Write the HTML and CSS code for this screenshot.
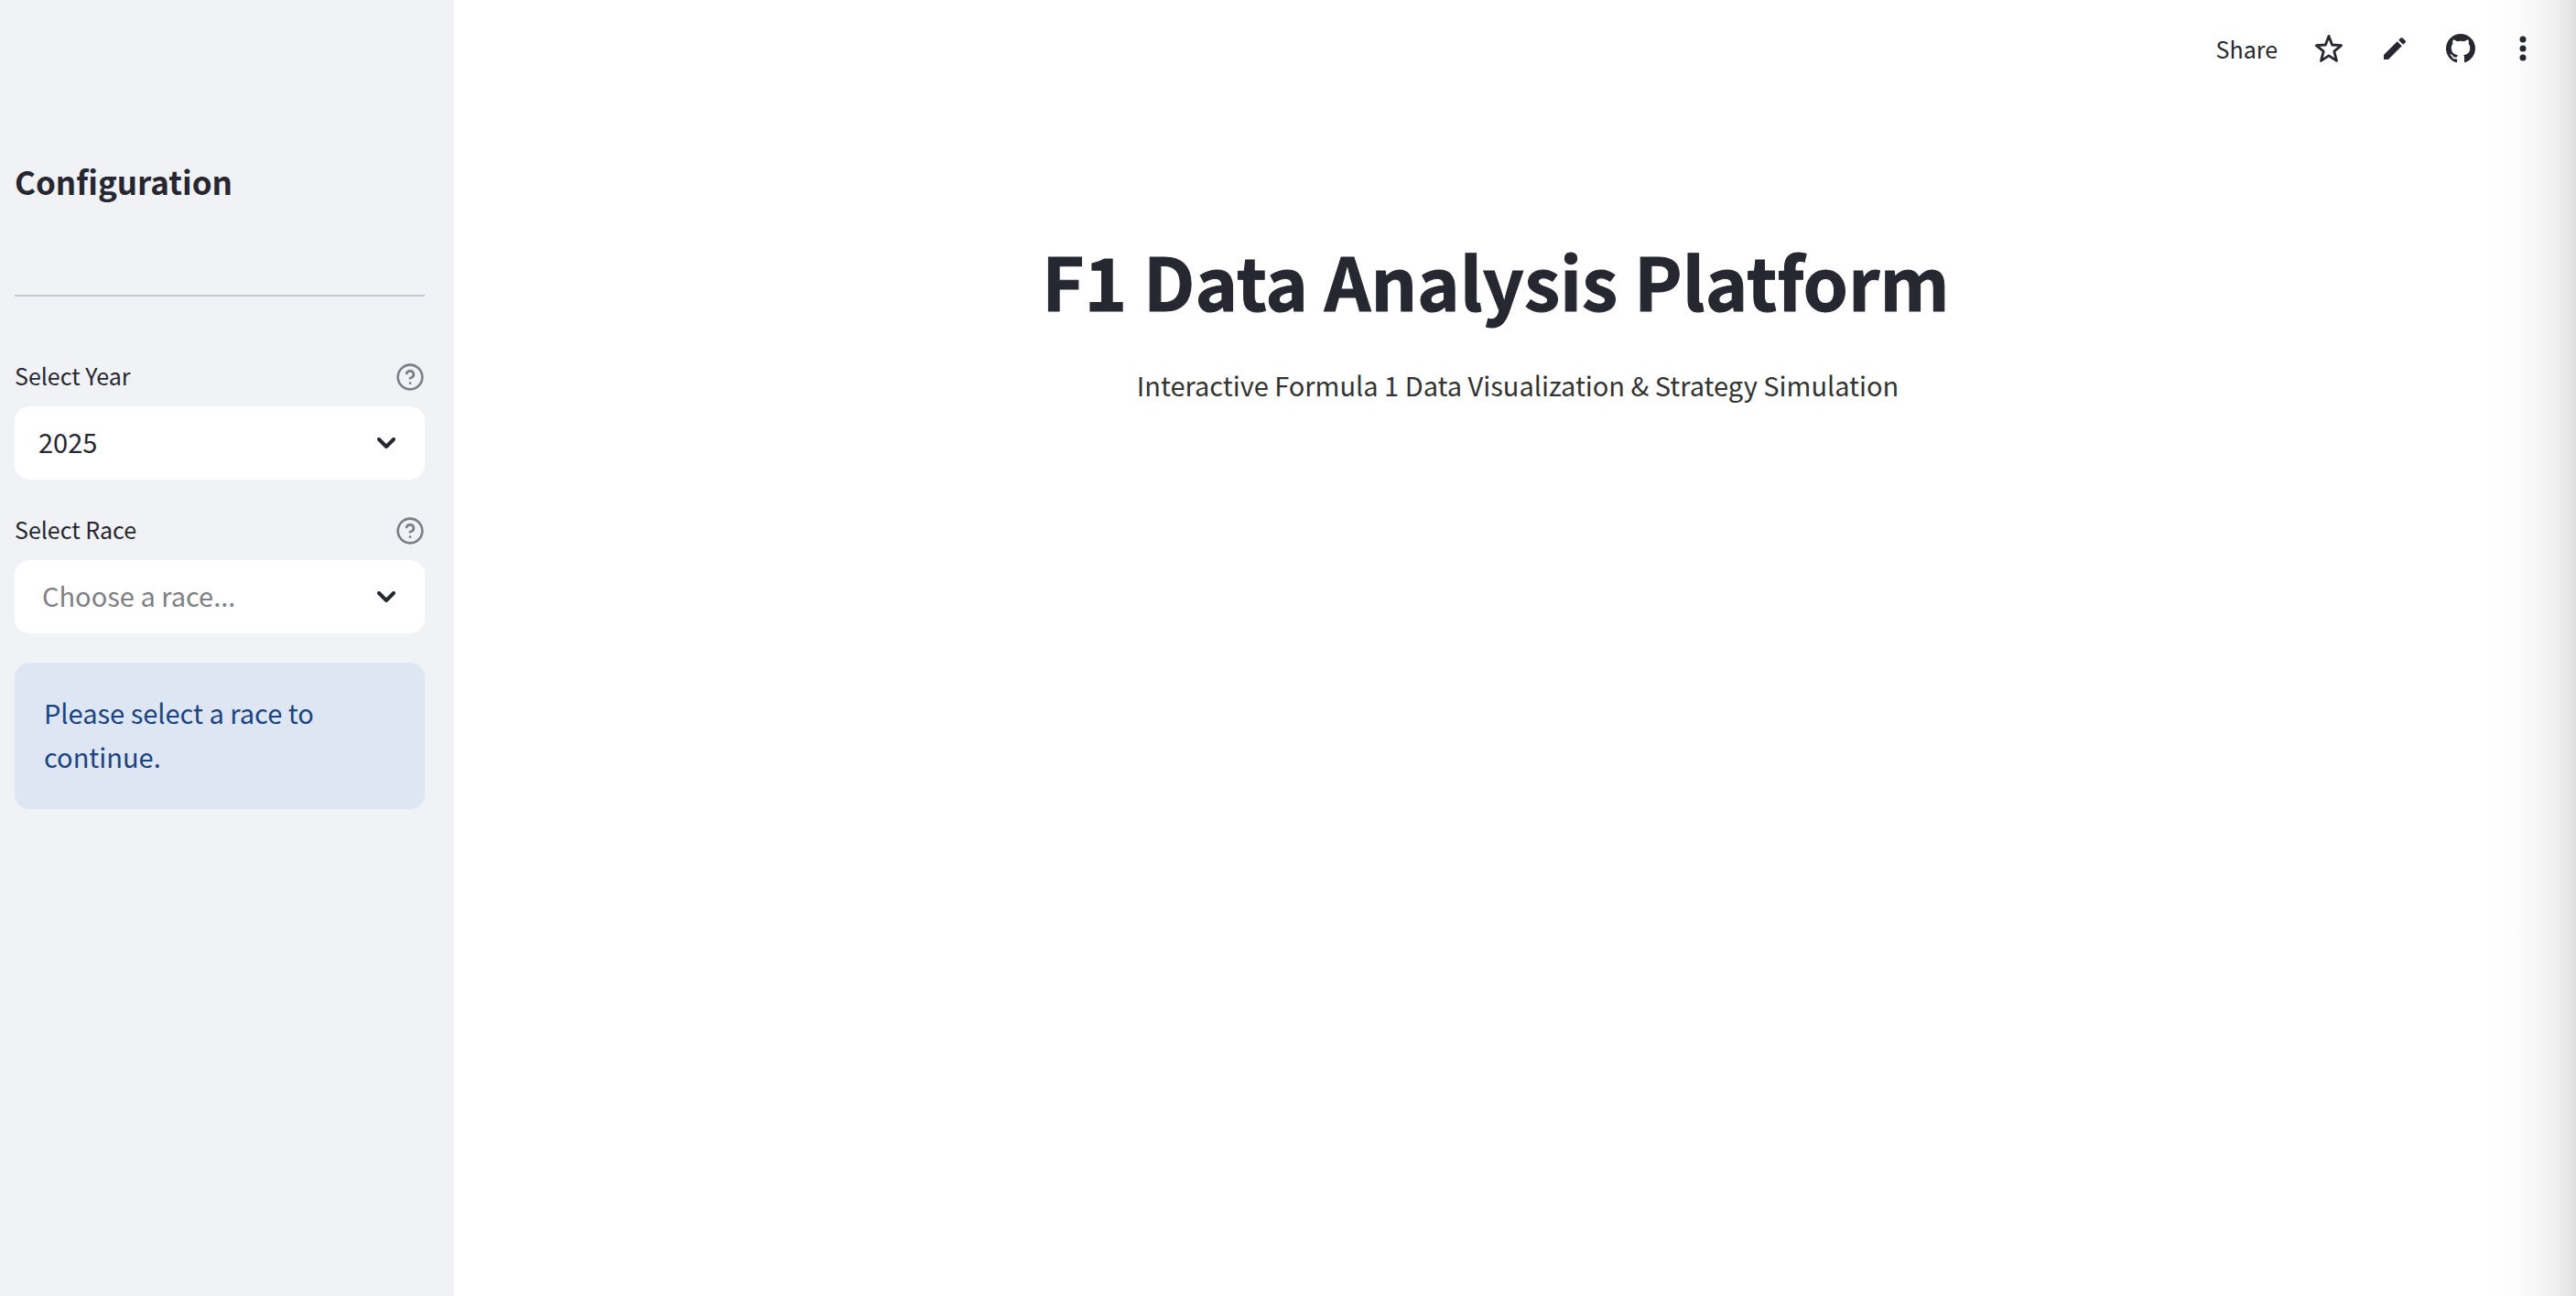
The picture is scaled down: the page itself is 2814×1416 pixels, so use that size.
FILE: index.html
```html
<!DOCTYPE html>
<html lang="en">
<head>
  <meta charset="utf-8">
  <meta name="viewport" content="width=device-width, initial-scale=1">
  <title>F1 Data Analysis Platform</title>
  <link rel="stylesheet" href="styles.css">
</head>
<body>
  <div class="app">
    <aside class="sidebar">
      <h2 class="sidebar-title">Configuration</h2>
      <hr class="divider">
      <form class="widgets">
        <div class="field">
          <div class="field-head">
            <label class="field-label" for="year">Select Year</label>
            <button class="help" type="button" aria-label="Help for Select Year">
              <svg class="help-icon" viewBox="0 0 24 24" aria-hidden="true"><circle cx="12" cy="12" r="10"/><path d="M9.09 9a3 3 0 0 1 5.83 1c0 2-3 3-3 3M12 17h.01"/></svg>
            </button>
          </div>
          <div class="select-box">
            <select class="select" id="year">
              <option selected>2025</option>
              <option>2024</option>
              <option>2023</option>
            </select>
            <svg class="chevron" viewBox="0 0 20 12" aria-hidden="true"><path d="M2 2l8 8 8-8"/></svg>
          </div>
        </div>
        <div class="field">
          <div class="field-head">
            <label class="field-label" for="race">Select Race</label>
            <button class="help" type="button" aria-label="Help for Select Race">
              <svg class="help-icon" viewBox="0 0 24 24" aria-hidden="true"><circle cx="12" cy="12" r="10"/><path d="M9.09 9a3 3 0 0 1 5.83 1c0 2-3 3-3 3M12 17h.01"/></svg>
            </button>
          </div>
          <div class="select-box">
            <select class="select select-empty" id="race">
              <option value="" selected>Choose a race...</option>
            </select>
            <svg class="chevron" viewBox="0 0 20 12" aria-hidden="true"><path d="M2 2l8 8 8-8"/></svg>
          </div>
        </div>
        <p class="alert" role="alert">Please select a race to continue.</p>
      </form>
    </aside>
    <div class="page">
      <header class="toolbar">
        <button class="tool tool-share" type="button">Share</button>
        <button class="tool" type="button" aria-label="Favorite">
          <svg class="icon" viewBox="0 0 16 16" aria-hidden="true"><path class="outline" d="M8 1.2l1.8 4.8 5 .35-3.9 3.25 1.35 5.1L8 11.9l-4.25 2.8 1.35-5.1L1.2 6.35l5-.35z"/></svg>
        </button>
        <button class="tool" type="button" aria-label="Edit source">
          <svg class="icon" viewBox="0 0 24 24" aria-hidden="true"><path d="M3 17.25V21h3.75L17.81 9.94l-3.75-3.75L3 17.25zM20.71 7.04a1 1 0 0 0 0-1.41l-2.34-2.34a1 1 0 0 0-1.41 0l-1.83 1.83 3.75 3.75 1.83-1.83z"/></svg>
        </button>
        <a class="tool" href="#" aria-label="View on GitHub">
          <svg class="icon" viewBox="0 0 16 16" aria-hidden="true"><path d="M8 0C3.58 0 0 3.58 0 8c0 3.54 2.29 6.53 5.47 7.59.4.07.55-.17.55-.38 0-.19-.01-.82-.01-1.49-2.01.37-2.53-.49-2.69-.94-.09-.23-.48-.94-.82-1.13-.28-.15-.68-.52-.01-.53.63-.01 1.08.58 1.23.82.72 1.21 1.87.87 2.33.66.07-.52.28-.87.51-1.07-1.78-.2-3.64-.89-3.64-3.95 0-.87.31-1.59.82-2.15-.08-.2-.36-1.02.08-2.12 0 0 .67-.21 2.2.82.64-.18 1.32-.27 2-.27s1.36.09 2 .27c1.53-1.04 2.2-.82 2.2-.82.44 1.1.16 1.92.08 2.12.51.56.82 1.27.82 2.15 0 3.07-1.87 3.75-3.65 3.95.29.25.54.73.54 1.48 0 1.07-.01 1.93-.01 2.2 0 .21.15.46.55.38A8.01 8.01 0 0 0 16 8c0-4.42-3.58-8-8-8z"/></svg>
        </a>
        <button class="tool tool-menu" type="button" aria-label="Main menu">
          <svg class="dots" viewBox="0 0 8 28" aria-hidden="true"><circle cx="4" cy="4" r="3.5"/><circle cx="4" cy="14" r="3.5"/><circle cx="4" cy="24" r="3.5"/></svg>
        </button>
      </header>
      <main class="content">
        <h1 class="title">F1 Data Analysis Platform</h1>
        <p class="subtitle">Interactive Formula 1 Data Visualization &amp; Strategy Simulation</p>
      </main>
    </div>
  </div>
</body>
</html>
```
FILE: styles.css
```css
* {
  box-sizing: border-box;
}

body {
  margin: 0;
  color: #262730;
  background: #fff;
  font: 29px/48px "Noto Sans CJK SC", "Noto Sans", sans-serif;
}

.app {
  display: flex;
  min-height: 100vh;
}

.sidebar {
  flex: 0 0 496px;
  padding: 168px 32px 32px 16px;
  background: #f0f2f6;
}

.sidebar-title {
  margin: 0;
  font-size: 35px;
  font-weight: 700;
  line-height: 60px;
}

.divider {
  height: 2px;
  margin: 94px 0 64px;
  border: 0;
  background: #c8c9ce;
}

.widgets {
  display: flex;
  flex-direction: column;
  gap: 32px;
}

.field-head {
  display: flex;
  align-items: flex-start;
  justify-content: space-between;
  height: 56px;
}

.field-label {
  font-size: 25px;
  line-height: 44px;
}

.help {
  display: flex;
  align-items: center;
  height: 48px;
  padding: 0;
  border: 0;
  background: none;
}

.help-icon {
  width: 32px;
  height: 32px;
  fill: none;
  stroke: #7d7e86;
  stroke-width: 2;
  stroke-linecap: round;
  stroke-linejoin: round;
}

.select-box {
  display: grid;
  align-items: center;
}

.select {
  grid-area: 1 / 1;
  width: 100%;
  height: 80px;
  padding: 0 80px 4px 26px;
  border: 0;
  border-radius: 16px;
  appearance: none;
  background: #fff;
  color: inherit;
  font: inherit;
}

.select-empty {
  padding-left: 30px;
  color: #7f8085;
}

.chevron {
  grid-area: 1 / 1;
  justify-self: end;
  width: 20px;
  height: 12px;
  margin-right: 32px;
  fill: none;
  stroke: #262730;
  stroke-width: 4;
  stroke-linecap: round;
  stroke-linejoin: round;
  pointer-events: none;
}

.alert {
  margin: 0;
  padding: 30px 32px 34px;
  border-radius: 16px;
  background: #dee6f3;
  color: #194481;
}

.page {
  flex: 1;
  background: linear-gradient(to left, #e0e0e0, #ececec 16px, #f5f5f5 38px, #fcfcfc 64px, #fff 96px);
}

.toolbar {
  display: flex;
  align-items: center;
  justify-content: flex-end;
  gap: 40px;
  height: 106px;
  padding-right: 54px;
}

.tool {
  display: flex;
  align-items: center;
  padding: 0;
  border: 0;
  background: none;
  color: #262730;
  font: inherit;
}

.tool-share {
  font-size: 25px;
}

.tool-menu {
  margin-left: 8px;
}

.icon {
  width: 32px;
  height: 32px;
  fill: currentColor;
}

.outline {
  fill: none;
  stroke: currentColor;
  stroke-width: 1.4;
  stroke-linejoin: round;
}

.dots {
  width: 8px;
  height: 28px;
  fill: currentColor;
}

.content {
  padding: 146px 26px 32px 32px;
  text-align: center;
}

.title {
  margin: 0 0 36px;
  padding-right: 48px;
  font-size: 79px;
  font-weight: 700;
  line-height: 108px;
  -webkit-text-stroke: 1px currentColor;
}

.subtitle {
  margin: 0;
  color: #333;
}
```
